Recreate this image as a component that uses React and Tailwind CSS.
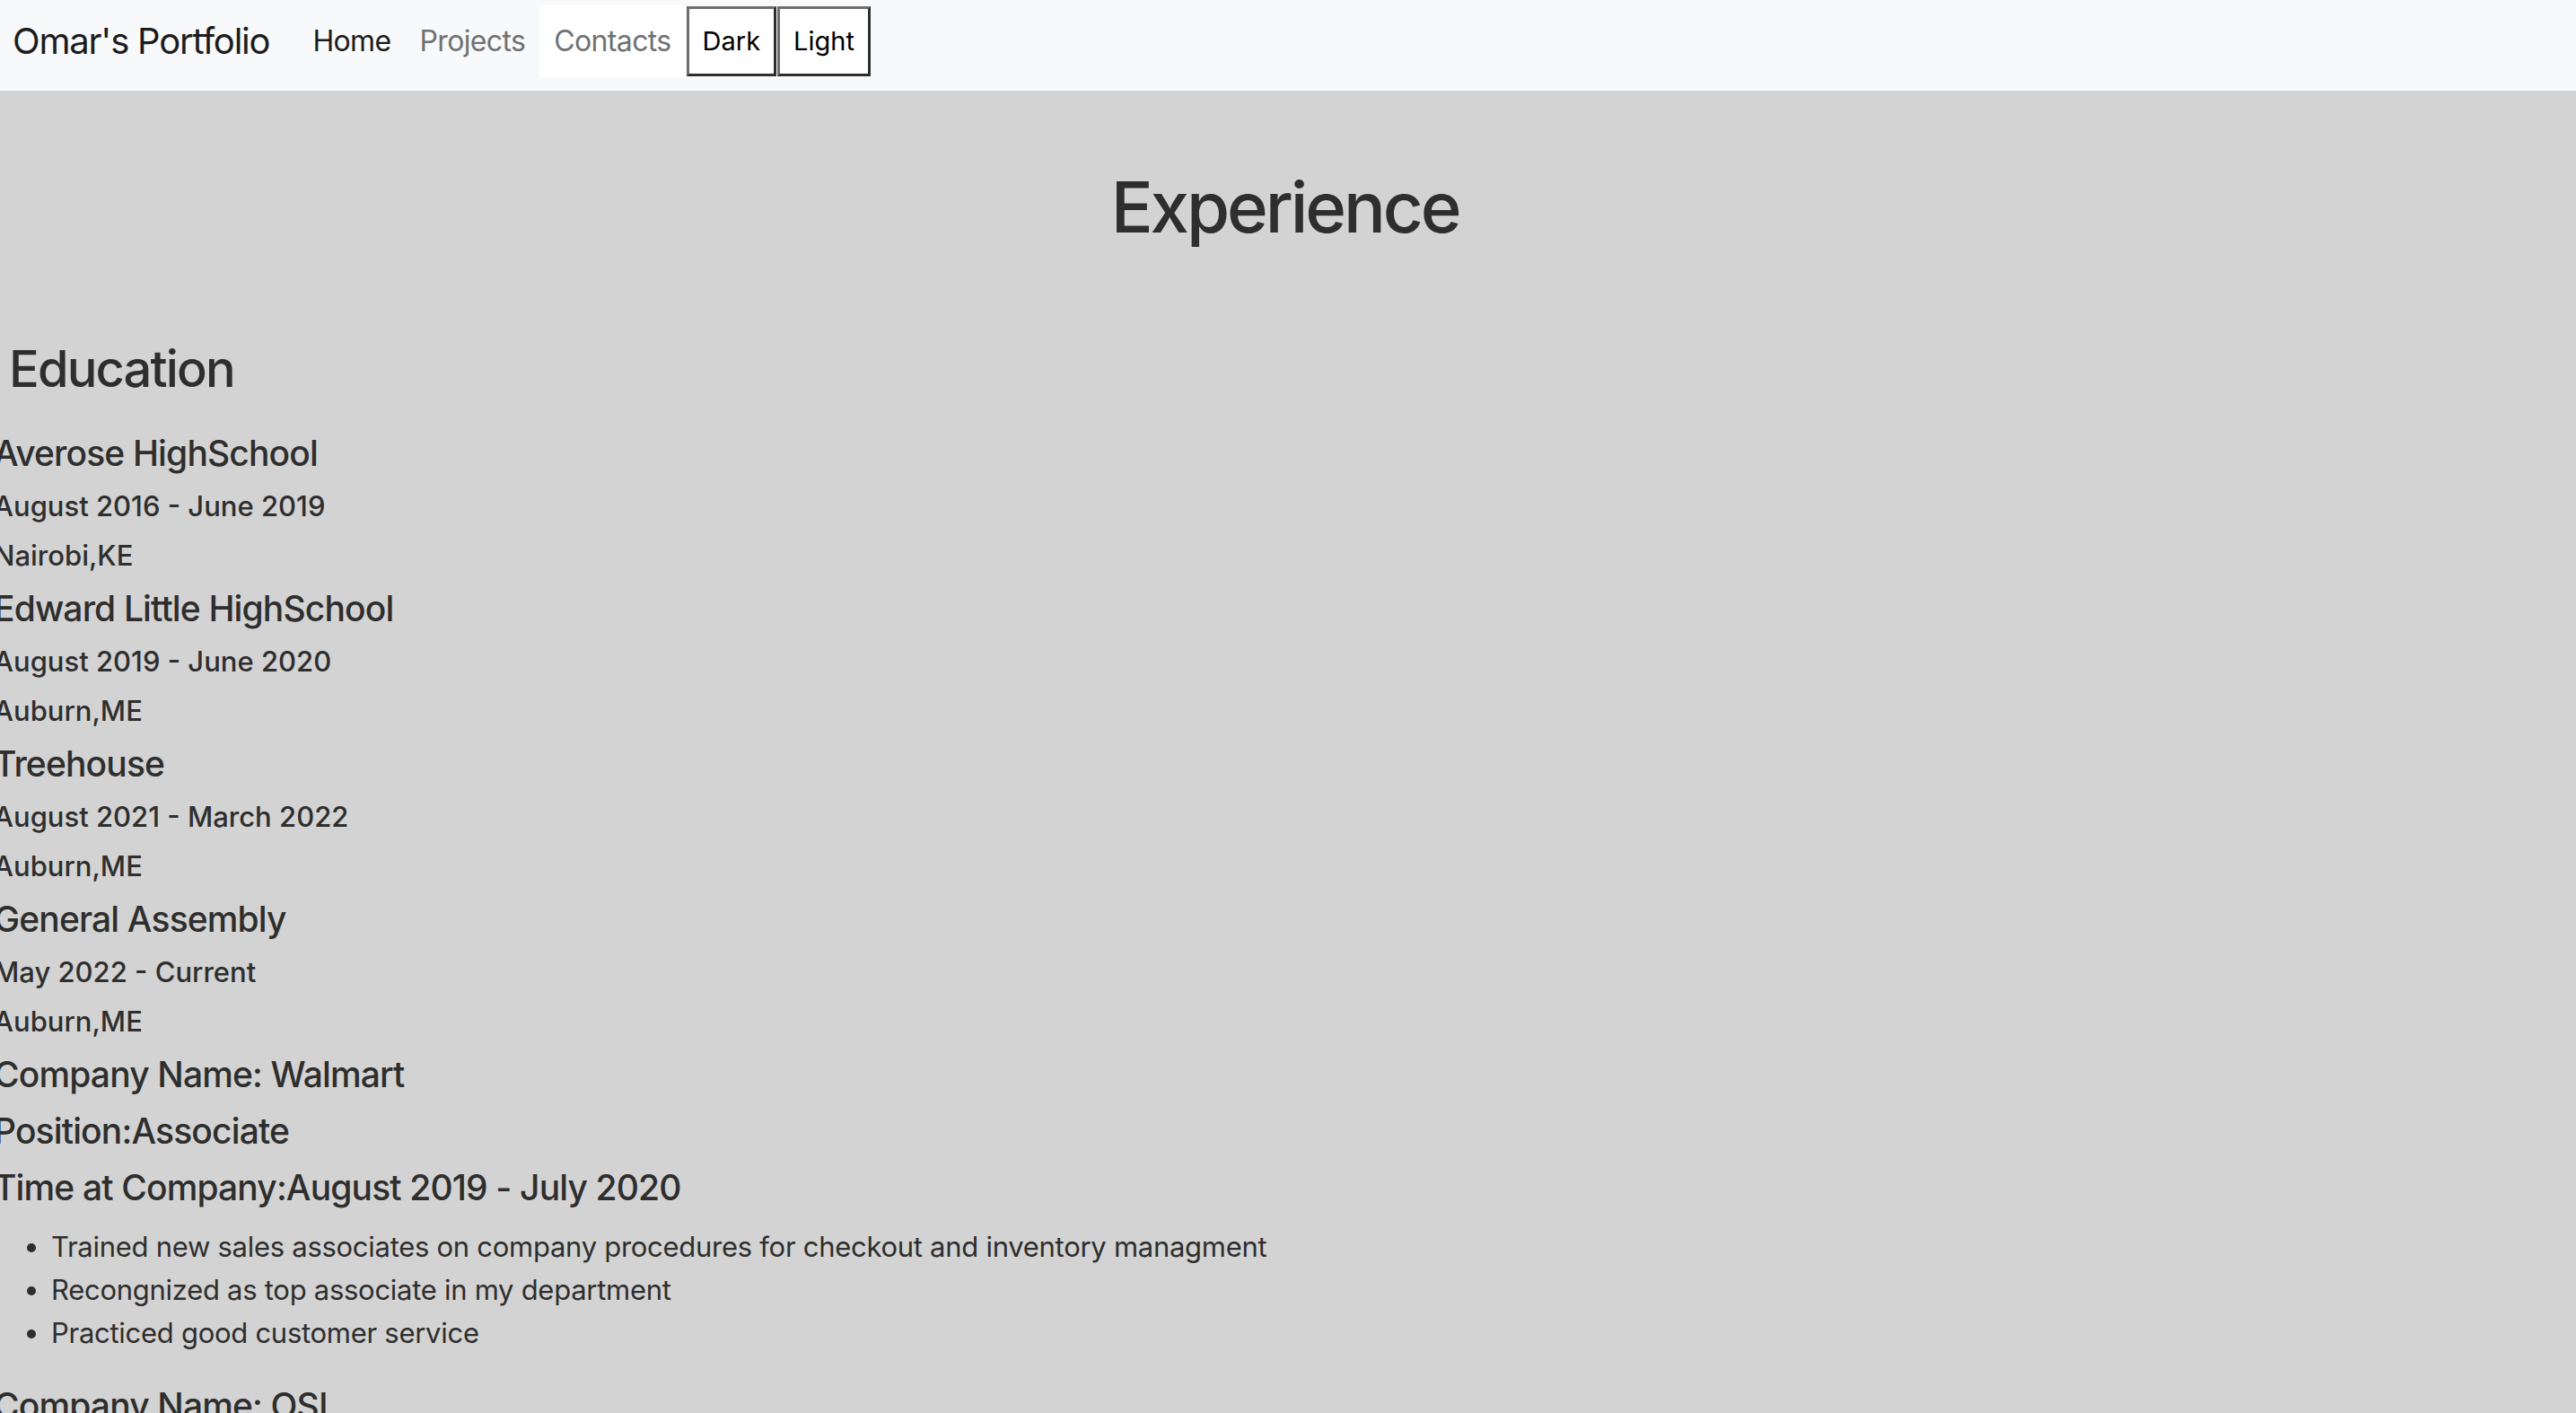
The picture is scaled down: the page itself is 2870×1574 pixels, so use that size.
import { useState } from "react";

const schools = [
  { name: "Averose HighSchool", time: "August 2016 - June 2019", place: "Nairobi,KE" },
  { name: "Edward Little HighSchool", time: "August 2019 - June 2020", place: "Auburn,ME" },
  { name: "Treehouse", time: "August 2021 - March 2022", place: "Auburn,ME" },
  { name: "General Assembly", time: "May 2022 - Current", place: "Auburn,ME" },
];

const walmart = [
  "Trained new sales associates on company procedures for checkout and inventory managment",
  "Recongnized as top associate in my department",
  "Practiced good customer service",
];

function Navbar({ setTheme }) {
  return (
    <nav className="flex items-center h-[101px] pb-[9px] pl-[14px] bg-[#f8f9fa]">
      <a className="text-[40px] leading-[60px] tracking-[-0.03em] text-[#1c1c1c] mr-[32px]">Omar's Portfolio</a>

      <a className="h-[80px] px-[16px] flex items-center text-[32px] tracking-[-0.02em] text-[#1c1c1c]">Home</a>

      <a className="h-[80px] px-[16px] flex items-center text-[32px] tracking-[-0.02em] text-[#707172]">Projects</a>

      <a className="h-[80px] px-[16px] flex items-center text-[32px] tracking-[-0.02em] text-[#707172] bg-white">Contacts</a>

      <button
        onClick={() => setTheme("dark")}
        className="
h-[78px]
ml-[1px]
px-[15px]
text-[29px]
text-black
bg-white
border-[3px]
border-t-[#6e6e6e]
border-l-[#6e6e6e]
border-r-[#2e2e2e]
border-b-[#2e2e2e]
"
      >
        Dark
      </button>

      <button
        onClick={() => setTheme("light")}
        className="
h-[78px]
ml-[1px]
px-[15px]
text-[29px]
text-black
bg-white
border-[3px]
border-t-[#6e6e6e]
border-l-[#6e6e6e]
border-r-[#2e2e2e]
border-b-[#2e2e2e]
"
      >
        Light
      </button>
    </nav>
  );
}

export default function App() {
  const [theme, setTheme] = useState("light");

  return (
    <div
      className="min-h-screen overflow-hidden bg-[#d3d3d3] text-[#2e2e2e]"
      style={{ fontFamily: "Inter, 'Noto Sans', sans-serif" }}
      data-theme={theme}
    >
      <Navbar setTheme={setTheme} />

      <main className="ml-[-7px]">
        <h1 className="mt-[82px] h-[96px] leading-[96px] text-center text-[78px] tracking-[-0.04em] font-medium">
          Experience
        </h1>

        <h2 className="mt-[98px] h-[68px] leading-[68px] pl-[17px] text-[56px] tracking-[-0.033em] font-medium">
          Education
        </h2>

        <div className="mt-[28px]">
          {schools.map((s) => (
            <div key={s.name}>
              <h5 className="h-[63px] leading-[63px] text-[39px] tracking-[-0.022em] font-medium">{s.name}</h5>
              <h6 className="h-[55px] leading-[55px] text-[31px] font-medium">{s.time}</h6>
              <h6 className="h-[55px] leading-[55px] text-[31px] font-medium">{s.place}</h6>
            </div>
          ))}
        </div>

        <div>
          <h5 className="h-[63px] leading-[63px] text-[39px] tracking-[-0.022em] font-medium">Company Name: Walmart</h5>
          <h5 className="h-[63px] leading-[63px] text-[39px] tracking-[-0.022em] font-medium">Position:Associate</h5>
          <h5 className="h-[63px] leading-[63px] text-[39px] tracking-[-0.022em] font-medium">
            Time at Company:August 2019 - July 2020
          </h5>

          <ul className="mt-[11px] mb-[25px] pl-[64px] list-disc">
            {walmart.map((item) => (
              <li key={item} className="leading-[48px] text-[31px] tracking-[-0.009em]">
                {item}
              </li>
            ))}
          </ul>

          <h5 className="h-[63px] leading-[63px] text-[39px] tracking-[-0.022em] font-medium">Company Name: OSI</h5>
        </div>
      </main>
    </div>
  );
}
